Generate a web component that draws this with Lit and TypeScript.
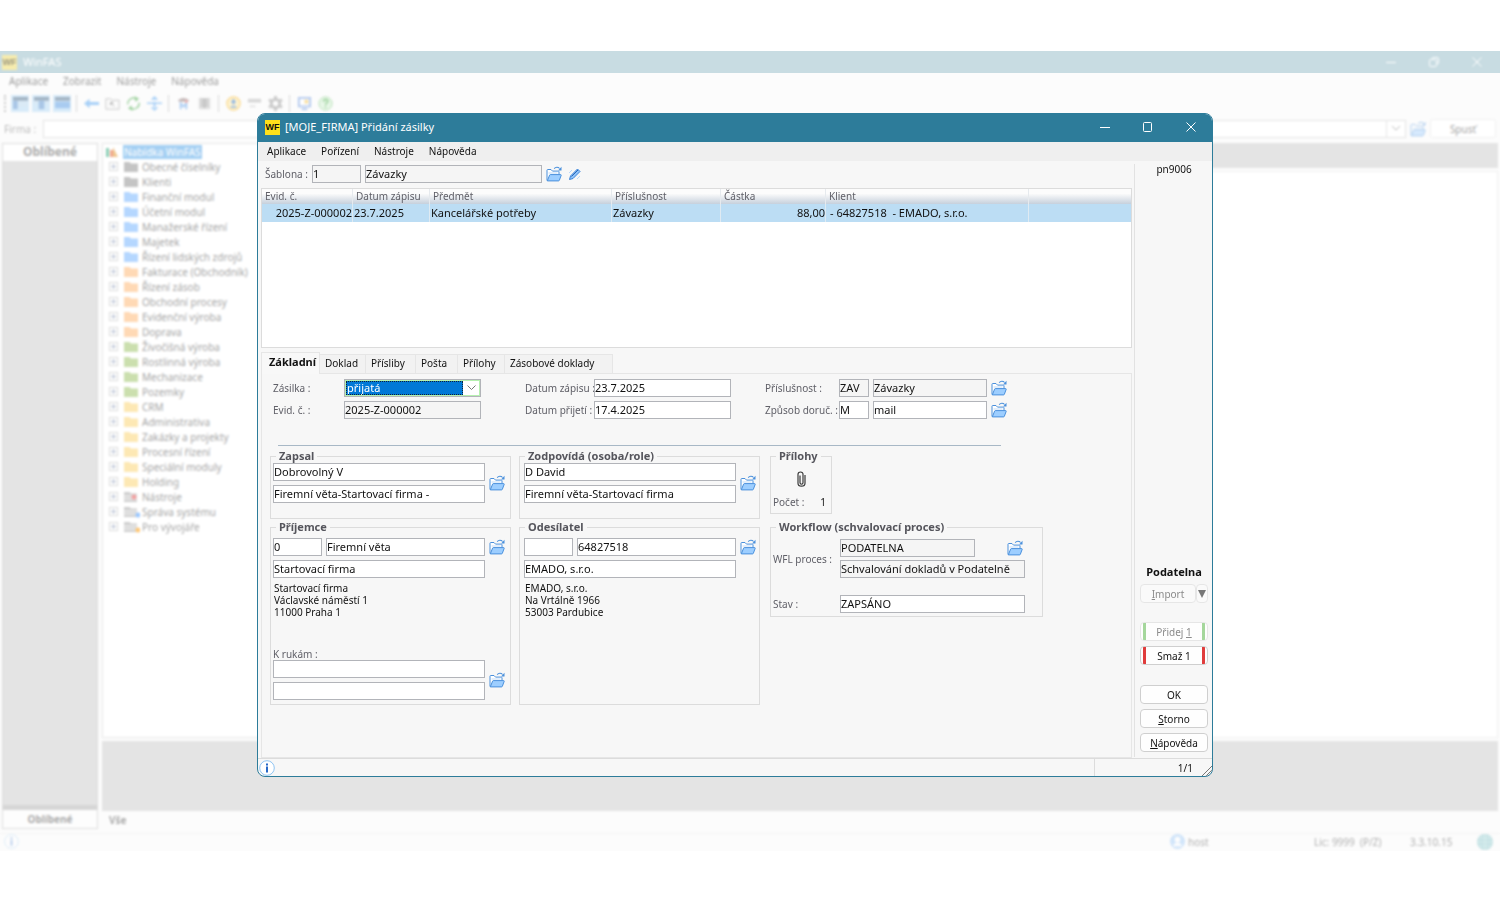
import { LitElement, html, css, svg, nothing } from "lit";
import { customElement } from "lit/decorators.js";

const TREE: [string, string][] = [
  ["Obecné číselníky", "#c4c4c4"],
  ["Klienti", "#c4c4c4"],
  ["Finanční modul", "#b5d7ff"],
  ["Účetní modul", "#b5d7ff"],
  ["Manažerské řízení", "#b5d7ff"],
  ["Majetek", "#b5d7ff"],
  ["Řízení lidských zdrojů", "#b5d7ff"],
  ["Fakturace (Obchodník)", "#ffd9b5"],
  ["Řízení zásob", "#ffd9b5"],
  ["Obchodní procesy", "#ffd9b5"],
  ["Evidenční výroba", "#ffd9b5"],
  ["Doprava", "#ffd9b5"],
  ["Živočišná výroba", "#cbdfae"],
  ["Rostlinná výroba", "#cbdfae"],
  ["Mechanizace", "#cbdfae"],
  ["Pozemky", "#cbdfae"],
  ["CRM", "#fde8b4"],
  ["Administrativa", "#fde8b4"],
  ["Zakázky a projekty", "#fde8b4"],
  ["Procesní řízení", "#fde8b4"],
  ["Speciální moduly", "#fde8b4"],
  ["Holding", "#fde8b4"],
  ["Nástroje", "red"],
  ["Správa systému", "blue"],
  ["Pro vývojáře", "orange"],
];

const openIcon = () => html`<svg class="ico" width="16" height="16" viewBox="0 0 16 16" fill="none" stroke="#4a90dc" stroke-linejoin="round">
  <path d="M1 14.5V4.2c0-.4.3-.7.7-.7H5l1.500 1.600h5.800c.4 0 .7.3.7.7v2.400" fill="#fff" stroke-width="1" />
  <path d="M2.500 7h9" stroke="#c5ddf8" />
  <path d="M1.300 14.900 3.600 9.100c.1-.3.4-.5.7-.5h10.400c.4 0 .6.4.5.7l-1.900 5.100c-.1.3-.4.5-.7.5z" fill="#9dceff" stroke-width="1" />
  <path d="M8.200 2.600C9.600.9 12 .7 13.600 2.500" stroke-width="1.100" />
  <path d="M15.500.8v3.600h-3.400z" fill="#4a90dc" stroke="none" />
</svg>`;

const treeIcon = (kind: string) => {
  if (kind.startsWith("#"))
    return html`<svg width="14" height="11" viewBox="0 0 14 11"><path d="M0 1h5.500L7 2.500h7V11H0z" fill=${kind} /></svg>`;
  const mark = { red: "#f3a3a3", blue: "#9cc8ff", orange: "#ffc878" }[kind];
  return html`<svg width="16" height="12" viewBox="0 0 16 12">
    <path d="M0 1h5.500L7 2.500h6V11H0z" fill="#cfcfcf" /><path d="M0 5h13M0 8h13" stroke="#fff" />
    <circle cx=${kind === "red" ? 10 : 14} cy=${kind === "red" ? 6 : 9} r="2.500" fill=${mark} />
  </svg>`;
};

const toolGlyphs: Record<string, unknown> = {
  p1: svg`<path d="M0 1h16v4H0z" fill="#a3b4c4"/><path d="M0 5h5v9H0z" fill="#a9c6e6"/><path d="M6 7h9M6 10h9" stroke="#dfe8f0"/>`,
  p2: svg`<path d="M0 1h16v4H0z" fill="#a3b4c4"/><path d="M5 5h6v9H5z" fill="#a9c6e6"/><path d="M0 7h4M12 7h4" stroke="#dfe8f0"/>`,
  p3: svg`<path d="M0 1h16v4H0z" fill="#a3b4c4"/><path d="M0 6h16v7H0z" fill="#a9cbf0"/>`,
  back: svg`<path d="M0 8l6-5v3.500h10v3H6V13z" fill="#a8d0f7"/>`,
  up: svg`<path d="M1 3h5l1 1.500h8V14H1z" fill="none" stroke="#c9c9c9"/><path d="M6 7l4 4M6 7v3M6 7h3" stroke="#aaa"/>`,
  refresh: svg`<path d="M2 9a6 6 0 0 1 9-6M14 7a6 6 0 0 1-9 6" fill="none" stroke="#a3d4a3" stroke-width="1.500"/><path d="M9 0l5 3-4 3zM7 16l-5-3 4-3z" fill="#a3d4a3"/>`,
  move: svg`<path d="M8 0l4 4H4zM8 16l4-4H4zM0 7h16v1.500H0zM7 6h2v7H7z" fill="#a8d0f7"/>`,
  hat: svg`<path d="M2 5c3-4 9-4 12 0l-2 1H4z" fill="#c5b9b9"/><path d="M5 14V8l3 3 3-3v6" fill="none" stroke="#b0cff3" stroke-width="2"/><circle cx="11" cy="6" r="1.500" fill="#f3b0b0"/>`,
  book: svg`<path d="M2 2h12v12H2z" fill="#dedede"/><path d="M4 4h8M4 7h8M4 10h8M8 3v10" stroke="#b8b8b8"/>`,
  user: svg`<circle cx="8" cy="8" r="7" fill="#fff3d0" stroke="#fadc98" stroke-width="1.500"/><path d="M8 3l3 4H9v2H7V7H5zM5 11h6v1.500H5z" fill="#8fb5e4"/>`,
  lines: svg`<path d="M1 4h14M1 6h14" stroke="#b8b8b8"/><path d="M3 11h6" stroke="#d0d0d0"/>`,
  gear: svg`<circle cx="8" cy="8" r="4.500" fill="none" stroke="#cacaca" stroke-width="3"/><path d="M8 0v3M8 13v3M1 4l2.500 1.500M12.500 10.500 15 12M1 12l2.500-1.500M12.500 5.500 15 4" stroke="#cacaca" stroke-width="3"/>`,
  screen: svg`<path d="M2 2h12v9H2z" fill="#fff" stroke="#b3c9ee" stroke-width="2"/><path d="M8 4h4v4H8z" fill="#f8dfa0"/><path d="M5 14h6" stroke="#b3c9ee" stroke-width="2"/>`,
  help: svg`<circle cx="8" cy="8" r="7" fill="#e8f7e8" stroke="#b8e0b8"/><path d="M6 6c0-3 4.500-3 4.500-.5C10.500 7.500 8 7.500 8 9.500M8 11v1.500" fill="none" stroke="#98d098" stroke-width="1.500"/>`,
};

const tool = (name: string, label: string, on = false) => html`<button class="tool ${on ? "on" : ""}" aria-label=${label}>
  <svg width="15" height="15" viewBox="0 0 16 16">${toolGlyphs[name]}</svg>
</button>`;

const field = (value: string, cls: string, label: string, id?: string, ro = false) => html`<input
  class="field ${cls} ${ro ? "ro" : ""}" type="text" id=${id ?? nothing} aria-label=${id ? nothing : label} .value=${value} ?readonly=${ro} />`;

const pick = (label: string) => html`<button class="pick" aria-label=${label}>${openIcon()}</button>`;

const infoIcon = (size: number) => html`<svg width=${size} height=${size} viewBox="0 0 16 16">
  <circle cx="8" cy="8" r="7.300" fill="#fff" stroke="#8fc4f2" /><path d="M7 3.500h2v2H7zM7 6.500h2v6H7z" fill="#2668c8" />
</svg>`;

@customElement("app-root")
export class AppRoot extends LitElement {
  static styles = css`
    :host {
      display: flex;
      flex-direction: column;
      box-sizing: border-box;
      min-height: 100vh;
      padding: 51px 0 49px;
      background: #fff;
      font: 10px/12px "Noto Sans", "Open Sans", sans-serif;
      color: #111;
    }
    *, *::before { box-sizing: border-box; }
    button, input, select { font: inherit; color: inherit; margin: 0; }
    button { padding: 0; border: 0; background: none; }
    svg { display: block; flex: none; }
    .app { position: relative; flex: 1; display: flex; flex-direction: column; background: #fcfcfc; overflow: hidden; }
    .logo {
      display: flex; align-items: center; justify-content: center; flex: none;
      width: 15px; height: 15px; background: #ffe01b; color: #111;
      font: bold 9px/15px "Liberation Sans", sans-serif;
    }
    /* main window */
    .bar { display: flex; align-items: center; height: 22px; padding: 0 2px 0 2px; background: #c8dce2; }
    .bar-in { display: flex; flex: 1; align-items: center; gap: 6px; filter: blur(1px); color: #fff; font-size: 11px; }
    .bar .logo { background: #f6ecae; color: #9b9780; }
    .caps { display: flex; margin-left: auto; }
    .cap { display: flex; align-items: center; justify-content: center; width: 43px; height: 20px; }
    .rest { flex: 1; display: flex; flex-direction: column; filter: blur(1px); color: #9c9c9c; }
    .menu { display: flex; gap: 15px; align-items: center; height: 17px; padding: 0 9px 2px; }
    .menu a { color: inherit; text-decoration: none; }
    .tools { display: flex; align-items: center; height: 27px; padding-left: 4px; }
    .grip { width: 2px; height: 17px; margin-right: 4px; border-left: 2px dotted #ccc; }
    .tool { display: flex; align-items: center; justify-content: center; width: 18px; height: 17px; margin: 0 2px 0 1px; }
    .tool.on { background: #d8ebf9; }
    .sep { width: 1px; height: 17px; margin: 0 4px 0 3px; background: #dadada; }
    .firm { display: flex; align-items: center; height: 25px; padding: 0 4px 2px; gap: 4px; color: #bcbcbc; }
    .firm label { width: 35px; }
    .firm-box { display: flex; flex: 1; height: 18px; border: 1px solid #e4e4e4; background: #fff; }
    .firm-box select { flex: 1; appearance: none; border: 0; background: none; }
    .firm-arrow { display: flex; align-items: center; justify-content: center; width: 19px; border-left: 1px solid #e8e8e8; }
    .firm .pick { opacity: 0.4; }
    .run { width: 66px; height: 19px; border: 1px solid #f0f0f0; border-radius: 3px; background: #fff; color: #a4a4a4; }
    .work { flex: 1; display: flex; gap: 4px; padding: 1px 2px 0 2px; }
    .fav { display: flex; flex-direction: column; width: 96px; border: 1px solid #dedede; background: #e4e4e4; }
    .fav h2, .fav footer { margin: 0; height: 17px; background: #fff; text-align: center; font: bold 12px/16px "Noto Sans", sans-serif; color: #acacac; }
    .fav footer { margin-top: auto; border-top: 5px solid #d6d6d6; height: 23px; font-size: 10px; line-height: 18px; background: #fdfdfd; }
    .desk { flex: 1; display: flex; flex-direction: column; }
    .split { flex: 1; display: flex; gap: 4px; }
    .tree { width: 25%; border: 1px solid #e8e8e8; background: #fff; padding: 0 4px 0 2px; }
    .tree ul { list-style: none; margin: 0; padding: 0; }
    .node { display: flex; align-items: center; height: 15px; padding-left: 4px; color: #a6a6a6; white-space: nowrap; }
    .node svg { margin-right: 4px; }
    .node svg[width="16"] { margin-right: 2px; }
    .root { padding-left: 0; }
    .root span { background: #a5d0f3; color: #fff; padding: 0 1px; line-height: 14px; }
    .plus { width: 9px; height: 9px; margin-right: 6px; border: 1px solid #dcdcdc; background: linear-gradient(#b8c0d2, #b8c0d2) center / 5px 1px no-repeat, linear-gradient(#b8c0d2, #b8c0d2) center / 1px 5px no-repeat; }
    .view { flex: 1; display: flex; flex-direction: column; gap: 3px; }
    .view-head { height: 25px; background: #e4e4e4; }
    .view-body { flex: 1; border: 1px solid #efefef; background: #fff; }
    .log { height: 70px; margin-top: 3px; background: #e4e4e4; }
    .all { height: 18px; padding-left: 7px; font-weight: bold; line-height: 18px; color: #acacac; }
    .status { display: flex; align-items: center; height: 18px; margin-top: 4px; padding: 0 7px 2px 4px; border-top: 1px solid #f4f4f4; color: #b0b0b0; }
    .status svg { opacity: 0.3; }
    .host { display: flex; align-items: center; gap: 3px; margin-left: auto; width: 144px; }
    .lic { width: 96px; white-space: pre; }
    .ver { width: 67px; }

    /* dialog window */
    .dialog {
      position: absolute; top: 62px; bottom: 74px; left: 257px; right: 287px;
      display: flex; flex-direction: column; overflow: hidden;
      border: 1px solid #2d7c9a; border-radius: 8px; background: #f7f7f7;
    }
    .title { display: flex; align-items: center; gap: 5px; height: 28px; padding: 0 0 2px 7px; background: #2d7c9a; color: #fff; font-size: 11px; }
    .title .cap { height: 26px; }
    .dialog .menu { height: 19px; background: #efefef; }
    .main { flex: 1; display: flex; padding-left: 3px; }
    .left { flex: 1; min-width: 0; display: flex; flex-direction: column; }
    .muted, .f label { color: #606068; white-space: nowrap; }
    .tpl { display: flex; align-items: center; height: 27px; padding: 0 0 2px 4px; }
    .tpl label { width: 47px; color: #606068; }
    .field { display: block; height: 18px; min-width: 0; padding: 0 0 1px; border: 1px solid #b2b4b9; border-radius: 0; background: #fff; color: #111; font-size: 11px; line-height: 15px; outline: 0; }
    .field.ro { background: #f5f5f5; }
    .w30 { width: 30px; } .w49 { width: 49px; } .w114 { width: 114px; } .w135 { width: 135px; }
    .w137 { width: 137px; } .w160 { width: 160px; } .w177 { width: 177px; } .w185 { width: 185px; } .w212 { width: 212px; }
    .tpl .w177 { margin: 0 4px; }
    .pick { width: 16px; height: 16px; flex: none; }
    .pen { margin-left: 6px; }
    .grid { height: 160px; border: 1px solid #dcdcdc; background: #fff; margin-right: 2px; }
    table { width: 100%; table-layout: fixed; border-collapse: separate; border-spacing: 0; }
    th { height: 15px; padding: 0 0 1px 3px; border-right: 1px solid #e6eaee; background: linear-gradient(#fcfcfc 30%, #c6d0dc); text-align: left; font-weight: normal; line-height: 13px; color: #606068; }
    td { height: 18px; padding: 0 0 2px 1px; border-right: 1px solid #dfeaf2; background: #bcddf4; font-size: 11px; line-height: 15px; white-space: pre; }
    td.num { text-align: right; }
    td.id { text-align: right; }
    td.cli { padding-left: 4px; }
    th:last-child, td:last-child { border-right: 0; }
    .c1 { width: 91px; } .c2 { width: 77px; } .c3 { width: 182px; } .c4 { width: 109px; } .c5 { width: 105px; } .c6 { width: 203px; }
    .tabs { display: flex; align-items: flex-end; height: 22px; margin-top: 4px; }
    .tab { height: 20px; border: 1px solid #e6e6e6; border-width: 1px 1px 1px 0; background: #f2f2f2; text-align: left; padding: 0 0 2px 5px; white-space: nowrap; }
    .tab.on { height: 22px; border-width: 1px 1px 0 1px; background: #f8f8f8; font-weight: bold; font-size: 11px; padding: 0 0 4px 7px; }
    .t1 { width: 59px; } .t2 { width: 46px; } .t3 { width: 50px; } .t4 { width: 42px; } .t5 { width: 47px; } .t6 { width: 108px; }
    .tabs::after { content: ""; flex: 1; margin-right: 2px; border-bottom: 1px solid #e6e6e6; }
    .page { flex: 1; padding: 5px 0 0 8px; border: 1px solid #e6e6e6; border-top: 0; margin-right: 2px; }
    .form { display: flex; padding-left: 3px; }
    .f { display: grid; row-gap: 4px; align-items: center; }
    .fa { grid-template-columns: 71px 137px; margin-right: 44px; }
    .fb { grid-template-columns: 69px 137px; margin-right: 34px; }
    .fc { grid-template-columns: 70px 30px 114px 16px; column-gap: 4px; }
    .combo { display: flex; height: 18px; padding: 1px; border: 1px solid #b2b4b9; background: #b6f0b0; }
    .combo select { flex: 1; appearance: none; border: 0; border-radius: 0; padding: 0 1px; background: #0078d7; color: #fff; font-size: 11px; line-height: 14px; outline: 1px dotted #123; outline-offset: -1px; }
    .combo-arrow { display: flex; align-items: center; justify-content: center; width: 16px; background: #fff; }
    .rule { width: 723px; height: 1px; margin: 26px 0 4px 8px; border: 0; background: #a8b8c6; }
    .groups { display: flex; align-items: flex-start; }
    .col { display: flex; flex-direction: column; gap: 2px; margin-right: 8px; width: 241px; }
    .col.mid { margin-right: 10px; }
    .col.end { width: 273px; margin: 0; gap: 7px; }
    fieldset { min-width: 0; margin: 0; padding: 1px 0 0 2px; border: 1px solid #dcdcdc; }
    .col.mid fieldset { padding-left: 4px; }
    legend { margin-left: 3px; padding: 0 3px; font-weight: bold; font-size: 11px; line-height: 12px; color: #55555c; }
    .col.mid legend { margin-left: 1px; }
    .g1 { height: 69px; }
    .g2, .col.mid .g2 { height: 184px; padding-top: 5px; }
    .att { width: 62px; height: 64px; }
    .wf { height: 96px; padding-top: 6px; }
    .pair { display: flex; align-items: center; gap: 4px; }
    .stack { display: flex; flex-direction: column; gap: 4px; }
    .two { display: flex; gap: 4px; }
    .two .w160 { width: 159px; }
    address { font-style: normal; padding: 0 0 0 1px; }
    .hands { margin-top: 26px; }
    .clip { display: flex; justify-content: center; padding: 8px 3px 9px 0; width: 60px; }
    .clip button { height: 16px; }
    .count { display: flex; justify-content: space-between; padding-right: 5px; }
    .wf-grid { display: grid; grid-template-columns: 67px 185px; row-gap: 3px; align-items: center; }
    .wf-grid .tall { grid-row: span 2; }
    .wf-row { display: flex; align-items: center; justify-content: space-between; padding-right: 2px; }
    .gap { margin-top: 14px; }
    .side { width: 78px; margin: 3px 0 1px; padding: 0 4px 0 5px; border-left: 1px solid #e2e2e2; display: flex; flex-direction: column; text-align: center; line-height: 10px; }
    .side .spacer { flex: 1; }
    .side strong { font-size: 11px; line-height: 12px; margin-bottom: 6px; }
    .btn { height: 19px; flex: none; margin-bottom: 5px; border: 1px solid #cfcfcf; border-radius: 4px; background: #fefefe; line-height: 12px; white-space: nowrap; }
    .btn.off { border-color: #e6e6e6; background: #fafafa; color: #8a8a8a; }
    .btn.add, .btn.del { background: linear-gradient(var(--edge), var(--edge)) 2px 0 / 3px 100% no-repeat, linear-gradient(var(--edge), var(--edge)) right 2px top 0 / 3px 100% no-repeat, #fefefe; }
    .btn.add { --edge: #a5d79c; border-color: #e6e6e6; color: #8a8a8a; }
    .btn.del { --edge: #e03c3c; margin-bottom: 20px; }
    .imp { display: flex; margin-bottom: 14px; }
    .imp .wide { flex: 1; }
    .imp .narrow { width: 12px; }
    .foot { display: flex; align-items: center; height: 18px; padding-left: 1px; border-top: 1px solid #dcdcdc; }
    .pos { display: flex; align-items: center; width: 118px; height: 17px; margin-left: auto; border-left: 1px solid #dcdcdc; }
    .pos span { flex: 1; text-align: right; padding-right: 9px; }
  `;

  caps(max: boolean) {
    return html`<div class="caps">
      <button class="cap" aria-label="Minimalizovat"><svg width="10" height="10"><path d="M0 5.500h10" stroke="#fff" /></svg></button>
      <button class="cap" aria-label="Maximalizovat">
        <svg width="10" height="10" fill="none" stroke="#fff">
          ${max ? svg`<rect x=".5" y=".5" width="8" height="9" rx="1" />` : svg`<rect x=".5" y="2.500" width="7" height="7" rx="1" /><path d="M3 1.500q0-1 1-1h4q1.500 0 1.500 1.500v4q0 1-1 1" />`}
        </svg>
      </button>
      <button class="cap" aria-label="Zavřít"><svg width="10" height="10"><path d="M.5.5l9 9M9.500.5l-9 9" stroke="#fff" /></svg></button>
    </div>`;
  }

  menu(items: string[]) {
    return html`<nav class="menu">${items.map((t) => html`<a href="#">${t}</a>`)}</nav>`;
  }

  background() {
    return html`
      <header class="bar"><div class="bar-in"><span class="logo">WF</span><span>WinFAS</span>${this.caps(false)}</div></header>
      <div class="rest">
        ${this.menu(["Aplikace", "Zobrazit", "Nástroje", "Nápověda"])}
        <div class="tools">
          <i class="grip"></i>
          ${tool("p1", "Panel vlevo", true)}${tool("p2", "Panel uprostřed", true)}${tool("p3", "Panel dole", true)}<i class="sep"></i>
          ${tool("back", "Zpět")}${tool("up", "O úroveň výš")}${tool("refresh", "Obnovit")}${tool("move", "Rozbalit")}<i class="sep"></i>
          ${tool("hat", "Průvodce")}${tool("book", "Kniha")}<i class="sep"></i>
          ${tool("user", "Uživatel")}${tool("lines", "Seznam")}${tool("gear", "Nastavení")}<i class="sep"></i>
          ${tool("screen", "Obrazovka")}${tool("help", "Nápověda")}
        </div>
        <div class="firm">
          <label for="firm">Firma :</label>
          <div class="firm-box">
            <select id="firm"><option></option></select>
            <span class="firm-arrow"><svg width="8" height="5" fill="none" stroke="#bbb"><path d="M0 0l4 4 4-4" /></svg></span>
          </div>
          ${pick("Vybrat firmu")}
          <button class="run">Spusť</button>
        </div>
        <div class="work">
          <aside class="fav"><h2>Oblíbené</h2><footer>Oblíbené</footer></aside>
          <div class="desk">
            <div class="split">
              <div class="tree">
                <div class="node root">
                  <svg width="14" height="12"><path d="M1 2h3v9H1z" fill="#8fd0b8" /><path d="M5 4h3v7H5z" fill="#f0a890" /><path d="M8 1l5 10H8z" fill="#f0c890" /></svg>
                  <span>Nabídka WinFAS</span>
                </div>
                <ul>${TREE.map(([t, k]) => html`<li class="node"><i class="plus"></i>${treeIcon(k)}${t}</li>`)}</ul>
              </div>
              <div class="view"><div class="view-head"></div><div class="view-body"></div></div>
            </div>
            <div class="log"></div>
            <div class="all">Vše</div>
          </div>
        </div>
        <footer class="status">
          ${infoIcon(15)}
          <span class="host">
            <svg width="15" height="15" viewBox="0 0 16 16"><circle cx="8" cy="8" r="8" fill="#6fb1f5" /><circle cx="8" cy="6" r="3" fill="#fff" /><path d="M3 13c1-5 9-5 10 0z" fill="#fff" /></svg>host
          </span>
          <span class="lic">Lic: 9999  (P/Z)</span><span class="ver">3.3.10.15</span>
          <svg width="16" height="16"><circle cx="8" cy="8" r="8" fill="#4aa9b0" /><path d="M0 8h16M8 0v16M2 4h12M2 12h12" stroke="#8fd3d0" /></svg>
        </footer>
      </div>`;
  }

  grid() {
    return html`<div class="grid"><table>
      <colgroup><col class="c1" /><col class="c2" /><col class="c3" /><col class="c4" /><col class="c5" /><col class="c6" /><col /></colgroup>
      <thead><tr><th>Evid. č.</th><th>Datum zápisu</th><th>Předmět</th><th>Příslušnost</th><th>Částka</th><th>Klient</th><th></th></tr></thead>
      <tbody><tr><td class="id">2025-Z-000002</td><td>23.7.2025</td><td>Kancelářské potřeby</td><td>Závazky</td><td class="num">88,00</td><td class="cli">- 64827518  - EMADO, s.r.o.</td><td></td></tr></tbody>
    </table></div>`;
  }

  form() {
    return html`<div class="form">
      <div class="f fa">
        <label for="kind">Zásilka :</label>
        <div class="combo">
          <select id="kind"><option>přijatá</option></select>
          <span class="combo-arrow"><svg width="9" height="6" fill="none" stroke="#777"><path d="M.5.5l4 4 4-4" /></svg></span>
        </div>
        <label for="evid">Evid. č. :</label>${field("2025-Z-000002", "w137", "", "evid", true)}
      </div>
      <div class="f fb">
        <label for="dz">Datum zápisu :</label>${field("23.7.2025", "w137", "", "dz")}
        <label for="dp">Datum přijetí :</label>${field("17.4.2025", "w137", "", "dp")}
      </div>
      <div class="f fc">
        <label for="pr">Příslušnost :</label>${field("ZAV", "w30", "", "pr", true)}${field("Závazky", "w114", "Název příslušnosti", undefined, true)}${pick("Vybrat příslušnost")}
        <label for="zd">Způsob doruč. :</label>${field("M", "w30", "", "zd")}${field("mail", "w114", "Název způsobu doručení")}${pick("Vybrat způsob doručení")}
      </div>
    </div>`;
  }

  groups() {
    return html`<div class="groups">
      <div class="col">
        <fieldset class="g1"><legend>Zapsal</legend>
          <div class="pair"><div class="stack">${field("Dobrovolný V", "w212", "Zapsal")}${field("Firemní věta-Startovací firma -", "w212", "Firma zapsal")}</div>${pick("Vybrat osobu")}</div>
        </fieldset>
        <fieldset class="g2"><legend>Příjemce</legend>
          <div class="stack">
            <div class="pair"><div class="two">${field("0", "w49", "Číslo příjemce")}${field("Firemní věta", "w160", "Příjemce")}</div>${pick("Vybrat příjemce")}</div>
            ${field("Startovací firma", "w212", "Název příjemce")}
            <address>Startovací firma<br />Václavské náměstí 1<br />11000 Praha 1</address>
            <label class="muted hands" for="hands">K rukám :</label>
          </div>
          <div class="pair"><div class="stack">${field("", "w212", "", "hands")}${field("", "w212", "K rukám, druhý řádek")}</div>${pick("Vybrat osobu")}</div>
        </fieldset>
      </div>
      <div class="col mid">
        <fieldset class="g1"><legend>Zodpovídá (osoba/role)</legend>
          <div class="pair"><div class="stack">${field("D David", "w212", "Zodpovídá")}${field("Firemní věta-Startovací firma", "w212", "Firma zodpovídá")}</div>${pick("Vybrat osobu")}</div>
        </fieldset>
        <fieldset class="g2"><legend>Odesílatel</legend>
          <div class="stack">
            <div class="pair"><div class="two">${field("", "w49", "Číslo odesílatele")}${field("64827518", "w160", "IČO odesílatele")}</div>${pick("Vybrat odesílatele")}</div>
            ${field("EMADO, s.r.o.", "w212", "Název odesílatele")}
            <address>EMADO, s.r.o.<br />Na Vrtálně 1966<br />53003 Pardubice</address>
          </div>
        </fieldset>
      </div>
      <div class="col end">
        <fieldset class="att"><legend>Přílohy</legend>
          <div class="clip"><button aria-label="Přílohy"><svg width="9" height="16" viewBox="0 0 9 16" fill="none" stroke="#3a3a3a" stroke-width="1.200"><path d="M3 4.500v7.300c0 1.900 3 1.900 3 0V3.300C6 .2 1 .2 1 3.300v8.900c0 4 7 4 7 0V4" /></svg></button></div>
          <div class="count"><span class="muted">Počet :</span><span>1</span></div>
        </fieldset>
        <fieldset class="wf"><legend>Workflow (schvalovací proces)</legend>
          <div class="wf-grid">
            <label class="muted tall" for="wfl">WFL proces :</label>
            <div class="wf-row">${field("PODATELNA", "w135", "", "wfl", true)}${pick("Vybrat proces")}</div>
            ${field("Schvalování dokladů v Podatelně", "w185", "Název procesu", undefined, true)}
            <label class="muted gap" for="st">Stav :</label>${field("ZAPSÁNO", "w185 gap", "", "st")}
          </div>
        </fieldset>
      </div>
    </div>`;
  }

  render() {
    const tabs = ["Základní", "Doklad", "Přísliby", "Pošta", "Přílohy", "Zásobové doklady"];
    return html`<div class="app">
      ${this.background()}
      <section class="dialog" role="dialog" aria-label="Přidání zásilky">
        <header class="title"><span class="logo">WF</span><span>[MOJE_FIRMA] Přidání zásilky</span>${this.caps(true)}</header>
        ${this.menu(["Aplikace", "Pořízení", "Nástroje", "Nápověda"])}
        <div class="main">
          <div class="left">
            <div class="tpl">
              <label for="tpl">Šablona :</label>${field("1", "w49", "", "tpl", true)}${field("Závazky", "w177", "Název šablony", undefined, true)}${pick("Vybrat šablonu")}
              <button class="pick pen" aria-label="Upravit">
                <svg width="14" height="14" viewBox="0 0 14 14"><path d="M1.500 12.500l1-3.500L9.500 2l2.500 2.500-7 7z" fill="#8ec2fa" stroke="#3b82d6" /><path d="M3.500 9.500L10 3" stroke="#2868b8" /><path d="M1 6l3-3M9 12l3-3" stroke="#b9d8fa" /></svg>
              </button>
            </div>
            ${this.grid()}
            <div class="tabs" role="tablist">
              ${tabs.map((t, i) => html`<button role="tab" class="tab t${i + 1} ${i === 0 ? "on" : ""}" aria-selected=${i === 0}>${t}</button>`)}
            </div>
            <div class="page">${this.form()}<hr class="rule" />${this.groups()}</div>
          </div>
          <aside class="side">
            <span>pn9006</span>
            <span class="spacer"></span>
            <strong>Podatelna</strong>
            <div class="imp"><button class="btn off wide" disabled><u>I</u>mport</button><button class="btn off narrow" aria-label="Další možnosti importu" disabled><svg width="10" height="8"><path d="M1 0h8L5 8z" fill="#777" /></svg></button></div>
            <button class="btn add" disabled>Přidej <u>1</u></button>
            <button class="btn del">Smaž 1</button>
            <button class="btn">OK</button>
            <button class="btn"><u>S</u>torno</button>
            <button class="btn"><u>N</u>ápověda</button>
          </aside>
        </div>
        <footer class="foot">
          ${infoIcon(16)}
          <div class="pos"><span>1/1</span><svg width="10" height="16" stroke="#777"><path d="M0 16L10 6M4 16l6-6" /></svg></div>
        </footer>
      </section>
    </div>`;
  }
}
